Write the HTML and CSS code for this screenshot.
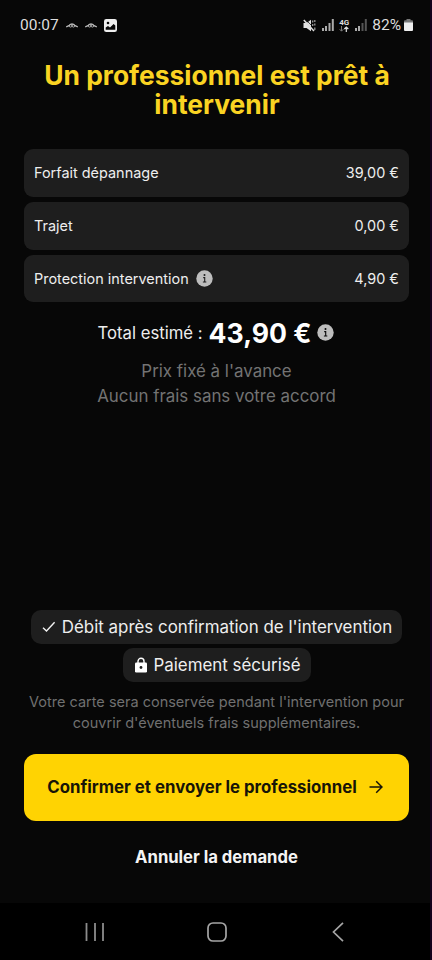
FILE: index.html
```html
<!DOCTYPE html>
<html lang="fr">
<head>
<meta charset="utf-8">
<title>Un professionnel est prêt à intervenir</title>
<link rel="stylesheet" href="styles.css">
</head>
<body>
<div class="phone">
  <header class="status">
    <span class="clock">00:07</span>
    <svg class="car" width="12" height="6" viewBox="0 0 12 6"><path d="M.2 5 3 3.6Q6 .4 9 3.6L11.8 5" fill="none" stroke="#b5b5b5" stroke-width="1.3"/><circle cx="4.6" cy="3.8" r="1.3" fill="none" stroke="#bbb" stroke-width=".9"/><circle cx="7.4" cy="3.8" r="1.3" fill="none" stroke="#bbb" stroke-width=".9"/></svg>
    <svg class="car" width="12" height="6" viewBox="0 0 12 6"><path d="M.2 5 3 3.6Q6 .4 9 3.6L11.8 5" fill="none" stroke="#b5b5b5" stroke-width="1.3"/><circle cx="4.6" cy="3.8" r="1.3" fill="none" stroke="#bbb" stroke-width=".9"/><circle cx="7.4" cy="3.8" r="1.3" fill="none" stroke="#bbb" stroke-width=".9"/></svg>
    <svg class="photo" width="13" height="13" viewBox="0 0 13 13"><rect width="13" height="13" rx="2.3" fill="#eee"/><circle cx="4" cy="4" r="1.3" fill="#070707"/><path d="M1.7 10.8V8.6L4 7l2 1.5L9.6 5l1.7 1.4v4.4z" fill="#070707"/></svg>
    <span class="spacer"></span>
    <svg class="mute" width="13" height="13" viewBox="0 0 13 13"><path d="M.5 4h3L8 .8v11.4L3.5 9H.5z" fill="#e2e2e2"/><path d="M2.4 .2 8.6 6.6" stroke="#070707" stroke-width=".8"/><path d="M.8 1 11 12" stroke="#ddd" stroke-width="1.5"/><path d="M9.7 1.5v2M9.7 5v2M11.8 1v2M11.8 4.5v2M11.8 8.5v2.5" stroke="#999" stroke-width="1.3"/></svg>
    <svg class="bars" width="12" height="12" viewBox="0 0 12 12"><path d="M1 9v3M4 7v5M7.5 4v8M10.8 0v12" stroke="#aaa" stroke-width="2"/></svg>
    <span class="net"><b>4G</b><svg width="10" height="6" viewBox="0 0 10 6"><path d="M2.5 0v5M.6 3.2l1.9 2 1.9-2" fill="none" stroke="#777"/><path d="M7.3 6V1M5.3 3l2-2 2 2" fill="none" stroke="#ddd" stroke-width="1.2"/></svg></span>
    <svg class="bars" width="12" height="12" viewBox="0 0 12 12"><path d="M1 9v3M4 7v5" stroke="#aaa" stroke-width="2"/><path d="M7.5 4v8M10.8 0v12" stroke="#555" stroke-width="2"/></svg>
    <span class="pct">82%</span>
    <svg class="batt" width="9" height="12" viewBox="0 0 9 12"><path d="M2.5 0h4v1.2H8Q9 1.2 9 2.5V4H0V2.5Q0 1.2 1 1.2h1.5z" fill="#777"/><path d="M0 3.5h9V11Q9 12 8 12H1Q0 12 0 11z" fill="#eee"/></svg>
  </header>

  <main class="content">
    <h1 class="title">Un professionnel est prêt à<br>intervenir</h1>
    <section class="rows">
      <div class="row"><span class="label">Forfait dépannage</span><span class="price">39,00 €</span></div>
      <div class="row"><span class="label">Trajet</span><span class="price">0,00 €</span></div>
      <div class="row"><span class="label">Protection intervention</span><svg class="info" width="17" height="17" viewBox="0 0 17 17"><circle cx="8.5" cy="8.5" r="8.2" fill="#bdbdbd"/><circle cx="8.5" cy="5" r="1" fill="#1e1e1e"/><path d="M7.2 7.6h1.5v4.2M6.9 12h3.4" fill="none" stroke="#1e1e1e" stroke-width="1.1"/></svg><span class="price">4,90 €</span></div>
    </section>
    <div class="total"><span class="total-label">Total estimé :</span><strong class="amount">43,90 €</strong><svg class="info" width="17" height="17" viewBox="0 0 17 17"><circle cx="8.5" cy="8.5" r="8.2" fill="#bdbdbd"/><circle cx="8.5" cy="5" r="1" fill="#070707"/><path d="M7.2 7.6h1.5v4.2M6.9 12h3.4" fill="none" stroke="#070707" stroke-width="1.1"/></svg></div>
    <p class="notes">Prix fixé à l'avance<br>Aucun frais sans votre accord</p>
    <div class="bottom">
      <div class="chip"><svg width="14" height="12" viewBox="0 0 14 12"><path d="M1 6.7 4.5 10 12.6 1.3" fill="none" stroke="#f2f2f2" stroke-width="1.4"/></svg><span class="chip-text">Débit après confirmation de l'intervention</span></div>
      <div class="chip lock"><svg width="12" height="16" viewBox="0 0 12 16"><path d="M3 7V4.3a3 3 0 0 1 6 0V7" fill="none" stroke="#fff" stroke-width="1.4"/><rect y="5.5" width="12" height="10" rx="1.3" fill="#fff"/><circle cx="6" cy="10.5" r="1.4" fill="#1e1e1e"/></svg><span class="chip-text">Paiement sécurisé</span></div>
      <p class="legal">Votre carte sera conservée pendant l'intervention pour<br>couvrir d'éventuels frais supplémentaires.</p>
      <button class="confirm"><span>Confirmer et envoyer le professionnel</span><svg width="14" height="14" viewBox="0 0 14 14"><path d="M.5 7h12M7.2 1.2 13 7l-5.8 5.8" fill="none" stroke="#171407" stroke-width="1.5"/></svg></button>
      <button class="cancel">Annuler la demande</button>
    </div>
  </main>

  <nav class="nav">
    <svg width="20" height="20" viewBox="0 0 20 20"><path d="M1.5 1v18M10 1v18M18 1v18" stroke="#8c8c8c" stroke-width="1.8"/></svg>
    <svg width="20" height="20" viewBox="0 0 20 20"><rect x="1" y="1" width="18" height="18" rx="5" fill="none" stroke="#a5a5a5" stroke-width="1.7"/></svg>
    <svg width="20" height="20" viewBox="0 0 20 20"><path d="M15 .8 5.5 10 15 19.2" fill="none" stroke="#a5a5a5" stroke-width="1.7"/></svg>
  </nav>
</div>
</body>
</html>
```
FILE: styles.css
```css
* { box-sizing: border-box; }
body { margin: 0; background: #070707; color: #eee; font-family: Inter, "Liberation Sans", sans-serif; }
svg { display: block; flex: none; }
h1, p { margin: 0; }
.phone { width: 432px; height: 960px; display: flex; flex-direction: column; overflow: hidden; white-space: nowrap; border-right: 2px solid #14001c; }
.status { height: 50px; padding: 0 17px 0 20px; display: flex; align-items: center; font-family: Roboto, sans-serif; font-size: 15.5px; color: #ddd; flex: none; }
.clock { width: 46px; }
.car { margin-right: 7px; }
.spacer { flex: 1; }
.mute { margin-right: 6px; }
.net { display: flex; flex-direction: column; align-items: center; width: 10px; margin: 0 6px 0 5px; }
.net b { font-size: 8px; line-height: 7px; }
.pct { margin: 0 3px 0 5px; }
.content { flex: 1; padding: 11px 22px 0 24px; display: flex; flex-direction: column; }
.title { font-size: 26.4px; line-height: 29px; font-weight: 700; color: #fad322; text-align: center; margin-right: -2px; }
.rows { margin-top: 30px; display: flex; flex-direction: column; gap: 5px; }
.row { height: 47.8px; width: 385px; border-radius: 9px; background: #1e1e1e; display: flex; align-items: center; padding: 0 10px .6px; font-size: 14.45px; }
.price { margin-left: auto; }
.row .info { margin-left: 7px; }
.total { height: 34px; margin-top: 13.6px; display: flex; align-items: center; justify-content: center; font-size: 16.7px; }
.amount { font-size: 26.6px; color: #fff; margin: 0 6px; }
.notes { margin-top: 9px; text-align: center; font-size: 16.9px; line-height: 25px; color: #737373; margin-right: -1px; }
.bottom { margin-top: auto; height: 293px; width: 385px; display: flex; flex-direction: column; align-items: center; }
.chip { height: 33.6px; background: #1e1e1e; border-radius: 10px; display: flex; align-items: center; gap: 6px; padding: 0 10px 0 11px; font-size: 16.9px; }
.lock { margin-top: 4.6px; gap: 7px; padding-left: 12px; }
.legal { margin-top: 9.2px; text-align: center; font-size: 14.5px; line-height: 21.5px; color: #707070; }
.confirm { margin-top: 20px; width: 385px; height: 67px; flex: none; border: 0; border-radius: 12px; background: #ffd302; color: #171407; font: 700 16.8px Inter, sans-serif; display: flex; align-items: center; justify-content: center; gap: 12px; padding: 0 3px 0 0; }
.cancel { margin-top: 26px; padding: 0; border: 0; background: none; color: #f4f4f4; font: 700 16.65px/20px Inter, sans-serif; }
.nav { height: 57px; background: #000; display: flex; align-items: center; justify-content: space-between; padding: 0 82px 0 85px; flex: none; }
```
